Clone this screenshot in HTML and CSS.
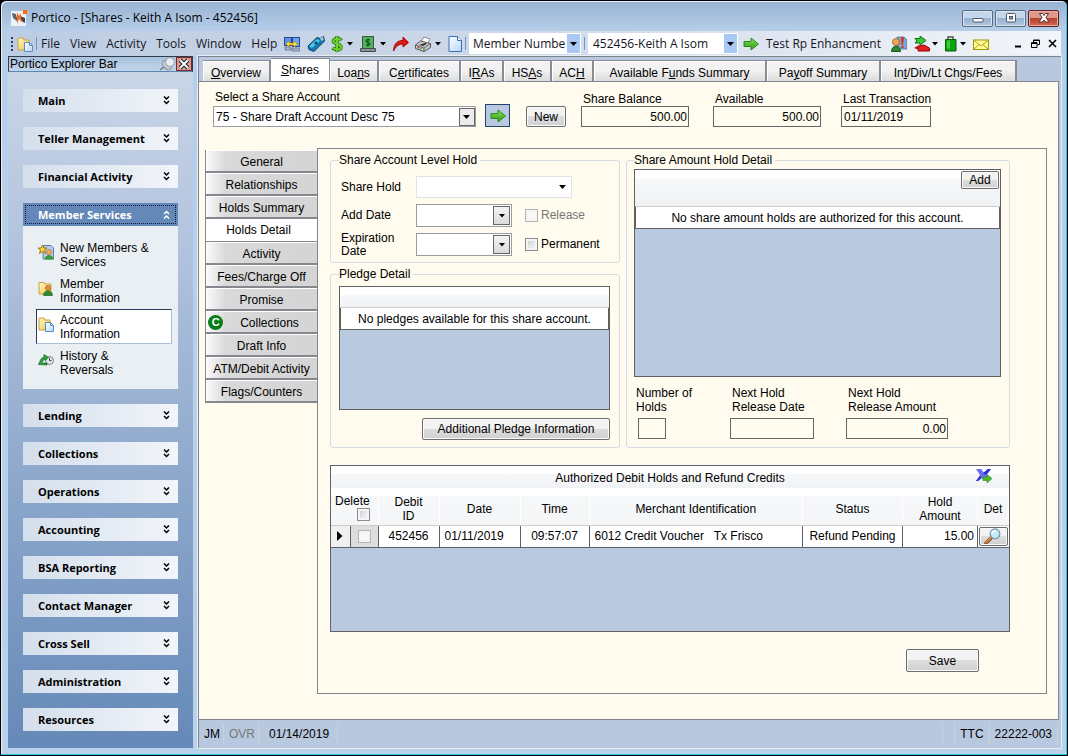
FILE: index.html
```html
<!DOCTYPE html>
<html lang="en">
<head>
<meta charset="utf-8">
<title>Portico - Shares</title>
<link rel="stylesheet" href="styles.css">
</head>
<body>
<svg class="defs" aria-hidden="true">
  <defs>
    <linearGradient id="greenG" x1="0" y1="0" x2="0" y2="1"><stop offset="0" stop-color="#8be060"/><stop offset="1" stop-color="#2a9a10"/></linearGradient>
    <linearGradient id="folderG" x1="0" y1="0" x2="1" y2="1"><stop offset="0" stop-color="#fff6c0"/><stop offset="1" stop-color="#ecc458"/></linearGradient>
    <linearGradient id="pageG" x1="0" y1="0" x2="1" y2="1"><stop offset="0" stop-color="#fff"/><stop offset="1" stop-color="#b4d8fa"/></linearGradient>
    <symbol id="folderpage" viewBox="0 0 16 16"><path d="M1 2h5l1 2h5v10H1z" fill="url(#folderG)" stroke="#c9a23c"/><path d="M7.500 6.500h5l3 3v6h-8z" fill="url(#pageG)" stroke="#5a8cc4"/><path d="M12.500 6.500v3h3" fill="none" stroke="#5a8cc4"/></symbol>
    <symbol id="chev" viewBox="0 0 7 9"><path d="M1 .5l2.500 2.500L6 .5M1 5l2.500 2.500L6 5" fill="none" stroke="currentColor" stroke-width="1.500"/></symbol>
    <symbol id="caret" viewBox="0 0 6 4"><path d="M0 0h6L3 3.500z"/></symbol>
    <symbol id="garrow" viewBox="0 0 16 14"><path d="M1 4.500h7V1l7.500 6L8 13V9.500H1z" fill="url(#greenG)" stroke="#2b8a1a"/></symbol>
  </defs>
</svg>
<div class="window">
  <header class="titlebar">
    <svg class="i16" viewBox="0 0 16 16"><rect y="1" width="15" height="15" fill="#eef1f5"/><path d="M1 3l4 1 2 8-5-4z" fill="#5a6470"/><path d="M9 6l5 2v5l-5-3z" fill="#3b4550"/><path d="M6 2l2 4 2-3v5l2 5-4-4-2 5z" fill="#f26a1b"/><rect x="12" width="4" height="4" fill="#ff6a10"/></svg>
    <h1>Portico - [Shares - Keith A Isom - 452456]</h1>
    <div class="winbtns">
      <button aria-label="Minimize"><svg viewBox="0 0 12 10" width="12" height="10"><rect x="1" y="5.500" width="10" height="3.500" rx="1" fill="#fff" stroke="#4a5666"/></svg></button>
      <button aria-label="Maximize"><svg viewBox="0 0 12 10" width="12" height="10"><rect x="1.500" y=".5" width="9" height="8.500" rx="1" fill="#fff" stroke="#4a5666"/><rect x="4.500" y="3.500" width="3" height="2.500" fill="#8da3bd" stroke="#4a5666"/></svg></button>
      <button class="close" aria-label="Close"><svg viewBox="0 0 12 10" width="12" height="10"><path d="M1.500.5h3L6 2.500 7.500.5h3L8 4.500l3 4.500H7.500L6 7 4.500 9H1l3-4.500z" fill="#fff" stroke="#5c3030"/></svg></button>
    </div>
  </header>

  <div class="toolbar">
    <span class="grip"></span>
    <svg class="i16"><use href="#folderpage"/></svg>
    <span class="sep"></span>
    <nav class="menu"><button>File</button><button>View</button><button>Activity</button><button>Tools</button><button>Window</button><button>Help</button></nav>
    <div class="tools">
      <svg class="i16" viewBox="0 0 16 16"><rect x=".5" y="1.500" width="7" height="8" fill="#5b94ea" stroke="#2b4790"/><rect x="8.500" y="1.500" width="7" height="9" fill="#66a4f4" stroke="#2b4790"/><path d="M1 11h6v3H1zM8 12h8v3H8z" fill="#a9b3c6" stroke="#5a6580" stroke-width=".7"/><path d="M2 8l3-3v2h5V5l3.500 3L10 11V9H5v2z" fill="#ffe23c" stroke="#a88400" stroke-width=".6"/></svg>
      <svg class="i18" viewBox="0 0 18 16"><path d="M1 10L10 1.500l3 1 3.500-2L17.500 5l-2 2-8.500 8.500-5-2z" fill="#1578ac" stroke="#0b4470"/><path d="M2 10l8-7 3 2-8 7z" fill="#4cc4e8"/><circle cx="9" cy="7" r="1.500" fill="#083c60"/><path d="M13 2l3-1 .5 3-2 1z" fill="#bcd"/></svg>
      <span class="drop"><svg class="i12" viewBox="0 0 12 16"><path d="M10.500 4.500C9 2.500 3 2 2.500 5S10 7.500 10 11s-6 3-8.500.8M6 0v16" fill="none" stroke="#2b7d10" stroke-width="3.600"/><path d="M10 4.500C9 2.500 3 2 2.500 5S10 7.500 10 11s-6 3-8 .8M6 .5v15" fill="none" stroke="#6fd030" stroke-width="2"/></svg><svg class="caret"><use href="#caret"/></svg></span>
      <span class="drop"><svg class="i16" viewBox="0 0 16 16"><rect x="2.500" y=".5" width="11" height="12" fill="#4db457" stroke="#40544a"/><path d="M10 4.200C9 3.200 6 3.200 6 5s4 1.200 4 3-3 1.700-4 .7M8 2.500v8" fill="none" stroke="#103a18"/><path d="M.5 12.500h15v3H.5z" fill="#8d9499" stroke="#454b50"/></svg><svg class="caret"><use href="#caret"/></svg></span>
      <svg class="i16" viewBox="0 0 16 16"><path d="M.5 15C1 8 4 4.500 10 4.500V1l5.500 5.500L10 11V8C6 8 3 10 .5 15z" fill="#e01818" stroke="#a00808"/></svg>
      <span class="drop"><svg class="i16" viewBox="0 0 16 16"><path d="M6 6l3-5 6 2-3 6z" fill="#fff" stroke="#777" stroke-width=".8"/><path d="M.5 9l5-4 10 2.500v4L9 15.500.5 12.500z" fill="#c9c9c9" stroke="#555"/><path d="M.5 9L9 12l6.500-4.500M9 12v3.500" fill="none" stroke="#666"/><path d="M4 9l6-2 2 1-4 2z" fill="#333"/><circle cx="3.500" cy="11.500" r=".9" fill="#d22"/><circle cx="6" cy="12.500" r=".8" fill="#2a2"/></svg><svg class="caret"><use href="#caret"/></svg></span>
      <svg class="i14" viewBox="0 0 14 16"><path d="M1 .5h8.500l4 4v11H1z" fill="url(#pageG)" stroke="#3c6cb4"/><path d="M9.500.5v4h4" fill="#fff" stroke="#3c6cb4"/></svg>
    </div>
    <span class="sep"></span>
    <select class="xp kind" aria-label="Search by"><option>Member Numbe</option></select>
    <span class="sep"></span>
    <select class="xp person" aria-label="Member"><option>452456-Keith A Isom</option></select>
    <button class="go"><svg width="16" height="14"><use href="#garrow"/></svg>Test Rp Enhancment</button>
    <div class="tools right">
      <svg class="i16" viewBox="0 0 16 16"><path d="M6 1h7l3 3v9H6z" fill="#7ba6d8" stroke="#3d6a9c" stroke-width=".7"/><path d="M10 1h3l-1 8h-1.500z" fill="#e03020"/><circle cx="11.500" cy="11" r="1.300" fill="#e03020"/><circle cx="5" cy="6" r="3.500" fill="#f0a850" stroke="#8a5418" stroke-width=".7"/><path d="M.5 15.500c0-7 9-7 9 0z" fill="#2f8a34" stroke="#1b5420"/></svg>
      <span class="drop"><svg class="i16" viewBox="0 0 16 16"><path d="M4 15l1-5 5-1 5.500 3v3z" fill="#e02020" stroke="#900"/><path d="M1 2.500h5V0l6 4.500L6 9V7H1l2-2z" fill="#38c838" stroke="#0a700a"/><path d="M0 12l5-3v5z" fill="#c01010"/></svg><svg class="caret"><use href="#caret"/></svg></span>
      <span class="drop"><svg class="i14" viewBox="0 0 14 16"><path d="M4 4V1h5v3" fill="none" stroke="#555" stroke-width="1.500"/><path d="M1.500 3.500h10.500v11.500H1.500z" fill="#0ca40c" stroke="#066006"/><path d="M3 4.500h3v8H3z" fill="#36cc36"/></svg><svg class="caret"><use href="#caret"/></svg></span>
      <svg class="i16" viewBox="0 0 16 16"><rect x=".5" y="4" width="15" height="9.500" fill="#fffa9a" stroke="#a09600"/><path d="M.5 4L8 10l7.500-6M.5 13.500L6 8.500M15.500 13.500L10 8.500" fill="none" stroke="#b0a400"/></svg>
    </div>
    <div class="mdi">
      <button aria-label="Minimize document"><svg viewBox="0 0 9 9" width="9" height="9"><path d="M1 7.500h6" stroke="#000" stroke-width="2"/></svg></button>
      <button aria-label="Restore document"><svg viewBox="0 0 9 9" width="9" height="9"><path d="M2.500 3V1h6v4.500H6.500M2.500 1.500h6" fill="none" stroke="#000"/><path d="M.5 3.500h5.500v5H.5zM.5 4.500H6" fill="none" stroke="#000"/></svg></button>
      <button aria-label="Close document"><svg viewBox="0 0 9 9" width="9" height="9"><path d="M1 1l7 7M8 1L1 8" stroke="#000" stroke-width="1.600"/></svg></button>
    </div>
  </div>

  <div class="body">
    <aside class="explorer">
      <div class="exphead"><h2>Portico Explorer Bar</h2>
        <svg width="17" height="14" viewBox="0 0 17 14"><path d="M1 13l5-4" stroke="#777" stroke-width="1.500"/><ellipse cx="8" cy="8" rx="5.500" ry="3.800" fill="#c4c8cf" stroke="#8a9099" transform="rotate(45 8 8)"/><circle cx="11" cy="5" r="4.300" fill="#eceef1" stroke="#9aa0a8"/></svg>
        <button aria-label="Close explorer bar"><svg viewBox="0 0 12 12" width="12" height="12"><path d="M2 2l8 8M10 2l-8 8" stroke="#222" stroke-width="4"/><path d="M2 2l8 8M10 2l-8 8" stroke="#fff" stroke-width="2"/></svg></button>
      </div>
      <nav class="groups">
        <button class="group">Main<svg class="chev"><use href="#chev"/></svg></button>
        <button class="group">Teller Management<svg class="chev"><use href="#chev"/></svg></button>
        <button class="group">Financial Activity<svg class="chev"><use href="#chev"/></svg></button>
        <div class="open">
          <button class="group active">Member Services<svg class="chev up"><use href="#chev"/></svg></button>
          <ul>
            <li><a href="#"><svg class="i16" viewBox="0 0 16 16"><path d="M5 1.500h8l2.500 2.500v11H5z" fill="#b9cbe8" stroke="#5c7cb0"/><circle cx="11" cy="8" r="2.500" fill="#f0b060" stroke="#9a6420" stroke-width=".6"/><path d="M6.500 15.500c0-6 9-6 9 0z" fill="#3c9c3c"/><path d="M4.500 1l1.300 3H9L6.500 6l1 3.500-3-2-3 2 1-3.500L0 4h3.200z" fill="#ffd832" stroke="#8c6400" stroke-width=".8"/></svg><span>New Members &amp; Services</span></a></li>
            <li><a href="#"><svg class="i16" viewBox="0 0 16 16"><path d="M1 2.500h5l1 1.500h6v10H1z" fill="url(#folderG)" stroke="#c9a23c"/><circle cx="10" cy="8" r="2.500" fill="#e8903c" stroke="#8a4c10" stroke-width=".6"/><path d="M5.500 15.500c0-6 9-6 9 0z" fill="#2c8c2c" stroke="#125412" stroke-width=".6"/></svg><span>Member Information</span></a></li>
            <li><a href="#" class="current"><svg class="i16"><use href="#folderpage"/></svg><span>Account Information</span></a></li>
            <li><a href="#"><svg class="i16" viewBox="0 0 16 16"><circle cx="11.500" cy="8.500" r="4" fill="#dfe5ea" stroke="#7b858e"/><path d="M11.500 6v2.500h2" fill="none" stroke="#444"/><path d="M.5 12.500L3 7l3-2.500V2.500L10.500 5.500 7 8.500V7L5 8.500 3.500 11H9v2z" fill="#2fa53b" stroke="#146a20" stroke-width=".7"/></svg><span>History &amp; Reversals</span></a></li>
          </ul>
        </div>
        <button class="group">Lending<svg class="chev"><use href="#chev"/></svg></button>
        <button class="group">Collections<svg class="chev"><use href="#chev"/></svg></button>
        <button class="group">Operations<svg class="chev"><use href="#chev"/></svg></button>
        <button class="group">Accounting<svg class="chev"><use href="#chev"/></svg></button>
        <button class="group">BSA Reporting<svg class="chev"><use href="#chev"/></svg></button>
        <button class="group">Contact Manager<svg class="chev"><use href="#chev"/></svg></button>
        <button class="group">Cross Sell<svg class="chev"><use href="#chev"/></svg></button>
        <button class="group">Administration<svg class="chev"><use href="#chev"/></svg></button>
        <button class="group">Resources<svg class="chev"><use href="#chev"/></svg></button>
      </nav>
    </aside>

    <main class="main">
      <nav class="tabs">
        <button><u>O</u>verview</button><button class="on"><u>S</u>hares</button><button>Loa<u>n</u>s</button><button>C<u>e</u>rtificates</button><button>I<u>R</u>As</button><button>HS<u>A</u>s</button><button>AC<u>H</u></button><button>Available F<u>u</u>nds Summary</button><button>Pa<u>y</u>off Summary</button><button>In<u>t</u>/Div/Lt Chgs/Fees</button>
      </nav>
      <section class="page">
        <div class="account">
          <div class="pick"><label for="acct">Select a Share Account</label>
            <select id="acct" class="boxed"><option>75 - Share Draft Account Desc 75</option></select></div>
          <button class="goacct" aria-label="Go to account"><svg width="16" height="14"><use href="#garrow"/></svg></button>
          <button class="btn new">New</button>
          <div class="fact"><label for="bal">Share Balance</label><input id="bal" class="ro num" value="500.00" readonly></div>
          <div class="fact"><label for="avl">Available</label><input id="avl" class="ro num" value="500.00" readonly></div>
          <div class="fact last"><label for="lst">Last Transaction</label><input id="lst" class="ro" value="01/11/2019" readonly></div>
        </div>

        <div class="detail">
          <nav class="sidetabs">
            <button>General</button><button>Relationships</button><button>Holds Summary</button><button class="on">Holds Detail</button><button>Activity</button><button>Fees/Charge Off</button><button>Promise</button><button class="flag"><span class="dot">C</span>Collections</button><button>Draft Info</button><button>ATM/Debit Activity</button><button>Flags/Counters</button>
          </nav>
          <div class="panel">
            <div class="cols">
              <div class="left">
                <fieldset class="hold"><legend>Share Account Level Hold</legend>
                  <div class="form">
                    <label for="sh">Share Hold</label><select id="sh" class="flat"><option></option></select>
                    <label for="ad">Add Date</label><span class="date"><input id="ad"><button aria-label="Pick add date"><svg class="caret"><use href="#caret"/></svg></button></span>
                    <label class="check off"><input type="checkbox" disabled>Release</label>
                    <label for="ed">Expiration Date</label><span class="date"><input id="ed"><button aria-label="Pick expiration date"><svg class="caret"><use href="#caret"/></svg></button></span>
                    <label class="check"><input type="checkbox">Permanent</label>
                  </div>
                </fieldset>
                <fieldset class="pledge"><legend>Pledge Detail</legend>
                  <div class="grid"><div class="ghead"></div><div class="grow">No pledges available for this share account.</div></div>
                  <button class="btn addl">Additional Pledge Information</button>
                </fieldset>
              </div>
              <fieldset class="amount"><legend>Share Amount Hold Detail</legend>
                <div class="grid"><div class="ghead tall"><button class="btn add">Add</button></div><div class="grow">No share amount holds are authorized for this account.</div></div>
                <div class="sums">
                  <div class="count"><label for="nh">Number of Holds</label><input id="nh" class="ro" readonly></div>
                  <div><label for="nd">Next Hold Release Date</label><input id="nd" class="ro" readonly></div>
                  <div><label for="na">Next Hold Release Amount</label><input id="na" class="ro num" value="0.00" readonly></div>
                </div>
              </fieldset>
            </div>

            <div class="grid debits">
              <div class="caption"><span>Authorized Debit Holds and Refund Credits</span><button aria-label="Export to Excel"><svg class="i18" viewBox="0 0 18 16"><path d="M1 1h5l3 4 4-4h3l-4.500 6L14 11H9L7 9l-4 4H1l4-6z" fill="#6a6cf4"/><path d="M8 5l5-4h3l-5 6zM1 13l4-5 2 2-4 3z" fill="#2c30d8"/><path d="M7 9h5V6.500l5 4-5 4.500v-2.500H8z" fill="#4fb832" stroke="#2d8818" stroke-width=".6"/></svg></button></div>
              <table>
                <colgroup><col class="c0"><col class="c1"><col class="c2"><col class="c3"><col class="c4"><col><col class="c6"><col class="c7"><col class="c8"></colgroup>
                <thead><tr><th colspan="2" class="del"><label>Delete<input type="checkbox"></label></th><th>Debit<br>ID</th><th>Date</th><th>Time</th><th>Merchant Identification</th><th>Status</th><th>Hold<br>Amount</th><th>Det</th></tr></thead>
                <tbody><tr><td class="sel"><svg width="6" height="10" viewBox="0 0 6 10"><path d="M0 0l5.500 5L0 10z"/></svg></td><td class="chk"><input type="checkbox" disabled aria-label="Delete 452456"></td><td>452456</td><td class="l">01/11/2019</td><td>09:57:07</td><td class="l">6012 Credit Voucher &nbsp; Tx Frisco</td><td>Refund Pending</td><td class="r">15.00</td><td class="det"><button class="btn" aria-label="Details"><svg class="i18" viewBox="0 0 18 16"><path d="M2 15l5-5" stroke="#6b4a2c" stroke-width="3.400" stroke-linecap="round"/><path d="M2 14.500l5-5" stroke="#e08a34" stroke-width="1.800" stroke-linecap="round"/><circle cx="11" cy="5.800" r="4.800" fill="#c4ecfc" stroke="#7c9cb4" stroke-width="1.300"/><path d="M8 5c.5-2 2-2.500 4-2.200" fill="none" stroke="#fff" stroke-width="1.500"/></svg></button></td></tr></tbody>
              </table>
            </div>
            <button class="btn save">Save</button>
          </div>
        </div>
      </section>
      <footer class="status"><span>JM</span><span class="dim">OVR</span><span class="day">01/14/2019</span><span class="fill"></span><span class="gap"></span><span>TTC</span><span>22222-003</span></footer>
    </main>
  </div>
</div>
</body>
</html>
```
FILE: styles.css
```css
* { box-sizing: border-box; }
body { margin: 0; font: 12px/14px "Liberation Sans", Arial, sans-serif; color: #000; background: #000; }
button, input, select { font: inherit; color: inherit; }
button { padding: 0; border: 0; background: none; text-align: center; }
h1, h2 { margin: 0; font-weight: normal; }
.defs { position: absolute; width: 0; height: 0; }
.i12 { width: 12px; height: 16px; }
.i14 { width: 14px; height: 16px; }
.i16 { width: 16px; height: 16px; }
.i18 { width: 18px; height: 16px; }
svg { flex: none; display: block; }
.caret { width: 6px; height: 4px; }

.window { display: flex; flex-direction: column; min-height: 100vh; border: 1px solid #000; border-radius: 6px 6px 0 0; padding: 0 6px 7px 7px; background: linear-gradient(#98b3d3, #b6cee9 30px, #b9d1ea); box-shadow: inset -1px -1px 0 #2cc8e4, inset 1px 1px 0 #e6f1fb; }

.titlebar { display: flex; align-items: center; height: 30px; padding: 4px 2px 0 3px; gap: 4px; font: 12px/16px "Open Sans", sans-serif; }
.titlebar h1 { flex: 1; font-size: 12px; line-height: 16px; }
.winbtns { display: flex; gap: 2px; }
.winbtns button { display: flex; align-items: center; justify-content: center; width: 31px; height: 17px; border: 1px solid #5a6c84; border-radius: 2px; background: linear-gradient(#c4d6ea 50%, #97b1d0 50%, #b0c8e2); box-shadow: inset 0 0 0 1px #d6e4f2; }
.winbtns .close { border-color: #5c2020; background: linear-gradient(#dd9a8c 45%, #b8402c 50%, #cf6a50); box-shadow: inset 0 0 0 1px #e8b0a4; }

.toolbar { display: flex; align-items: center; height: 25px; padding: 0 4px 0 3px; background: linear-gradient(90deg, #bccce2, #cfd9e9 50%, #f2f5fa); font: 12px/16px "Open Sans", sans-serif; color: #15151f; }
.grip { width: 2px; height: 14px; margin-right: 4px; background: repeating-linear-gradient(#27406f 0 2px, transparent 2px 4px); }
.sep { width: 1px; height: 13px; margin: 0 3px; background: #7095cc; }
.menu { display: flex; gap: 10px; flex: 0 0 244px; padding-left: 1px; }
.tools { display: flex; align-items: center; flex: 1 1 178px; max-width: 178px; justify-content: space-between; }
.drop { display: flex; align-items: center; gap: 4px; }
.xp { appearance: none; height: 21px; border: 0; padding: 0 14px 0 4px; color: #15151f; background: url("data:image/svg+xml,%3Csvg xmlns='http://www.w3.org/2000/svg' width='13' height='19'%3E%3Crect width='13' height='19' fill='%23a9c9f4'/%3E%3Cpath d='M3 8h7L6.500 12z'/%3E%3C/svg%3E") right 1px center no-repeat #fff; }
.kind { width: 112px; }
.person { width: 150px; padding-left: 5px; }
.go { display: flex; align-items: center; gap: 7px; margin-left: 5px; white-space: nowrap; }
.tools.right { margin-left: 10px; max-width: 98px; flex-basis: 98px; }
.tools.right .drop { gap: 2px; }
.mdi { display: flex; flex: 1; justify-content: flex-end; gap: 8px; }

.body { display: flex; flex: 1; }
.explorer { flex: 0 0 185px; background: linear-gradient(#cbd7e7, #b4c5df 25%, #6589b8); }
.exphead { display: flex; align-items: center; height: 16px; border: 1px solid #333c4c; border-bottom-color: #5c85b8; background: linear-gradient(#a8c2e0, #c3d4e8); }
.exphead h2 { flex: 1; padding-left: 1px; font-size: 12px; line-height: 14px; }
.exphead button { width: 16px; height: 14px; display: grid; place-items: center; border: 1px solid #7a2a26; background: #d89a96; }
.groups { display: flex; flex-direction: column; gap: 15px; padding: 17px 15px 16px 15px; }
.group { display: flex; align-items: center; justify-content: space-between; width: 100%; height: 23px; padding: 0 8px 0 15px; font: bold 11px/16px "Open Sans", sans-serif; background: linear-gradient(90deg, #d4dfec, #f2f5fa); }
.chev { width: 7px; height: 9px; }
.up { transform: rotate(180deg); }
.active { color: #fff; background: #6488b8; border: 1px solid #6488b8; outline: 1px dotted #0b1a38; outline-offset: -3px; padding: 0 7px 0 14px; }
.open { background: #e9eff3; }
.open ul { list-style: none; margin: 0; padding: 11px 6px 9px 13px; display: grid; gap: 1px; }
.open a { display: flex; gap: 6px; align-items: center; height: 35px; padding: 0 20px 0 1px; border: 1px solid transparent; color: #000; text-decoration: none; }
.open a svg { align-self: flex-start; margin-top: 6px; }
.open a.current { background: #fff; border-color: #26385c #aebfd8 #aebfd8 #26385c; }
.open span { max-width: 100px; }

.main { flex: 1; display: flex; flex-direction: column; margin-left: 5px; border: 1px solid #7d838c; border-width: 1px 0 0 1px; background: #b8c8df; box-shadow: 0 0 0 1px #e8eef4; min-width: 0; }
.tabs { display: grid; grid-template-columns: 68px 59px 49px 82px 43px 48px 42px 173px 114px 136px; align-items: end; padding: 0 0 0 4px; height: 24px; }
.tabs button { height: 21px; padding-top: 4px; border: 1px solid #888c96; border-width: 1px 2px 0 0; background: linear-gradient(#f2f2f2 45%, #dcdcdc); box-shadow: inset 1px 1px 0 #fff; white-space: nowrap; }
.tabs .on { height: 23px; padding: 0 0 1px; background: #fff; border-right-width: 1px; }
.page { flex: 1; margin: 0 2px 0 0; border: 1px solid #80858f; border-left: 0; background: #fffbee; padding: 7px 11px 24px 6px; }
.account { display: flex; align-items: flex-end; padding-left: 8px; height: 38px; }
.account label { display: block; }
.pick label { padding: 0 0 2px 2px; }
.boxed, .flat { appearance: none; display: block; border: 1px solid #9a9ca0; background-color: #fff; }
.boxed { width: 263px; height: 21px; padding: 0 20px 0 2px; background-image: url("data:image/svg+xml,%3Csvg xmlns='http://www.w3.org/2000/svg' width='16' height='18'%3E%3Crect x='.5' y='.5' width='15' height='17' fill='%23ececec' stroke='%23666'/%3E%3Cpath d='M4 7h7L7.500 11z'/%3E%3C/svg%3E"); background-repeat: no-repeat; background-position: right center; }
.goacct { width: 25px; height: 23px; margin-left: 9px; display: grid; place-items: center; border: 1px solid #26426e; background: #b8c9e0; }
.btn { border: 1px solid #6c6c6c; border-radius: 2px; background: linear-gradient(#f2f2f2 50%, #dddddd 50%, #cfcfcf); box-shadow: inset 0 0 0 1px #fafafa; }
.new { width: 40px; height: 21px; margin: 0 15px 0 16px; padding-top: 1px; }
.fact { width: 132px; }
.fact label { padding: 0 0 0 2px; }
.ro { display: block; width: 108px; height: 21px; border: 1px solid #666; background: transparent; padding: 0 2px; }
.fact.last { margin-left: -4px; }
.last .ro { width: 90px; }
.num { text-align: right; padding-right: 1px; }

.detail { display: flex; padding-top: 21px; }
.sidetabs { flex: 0 0 112px; padding-top: 2px; display: flex; flex-direction: column; }
.sidetabs button { height: 23px; padding: 2px 0 0; border: 1px solid #85888f; border-width: 0 0 2px 1px; background: linear-gradient(90deg, #fafafa, #d9d9d9 18%, #d4d4d4); box-shadow: inset 1px 1px 0 #fff; white-space: nowrap; }
.sidetabs .on { background: #fff; border-bottom-width: 1px; padding: 0 6px 0 0; }
.flag { display: flex; align-items: center; justify-content: center; gap: 17px; }
.sidetabs .flag { padding-right: 16px; }
.dot { width: 15px; height: 15px; border-radius: 50%; background: #087c14; color: #fff; font-size: 11px; font-weight: bold; }
.panel { flex: 1; border: 1px solid #80858f; padding: 5px 36px 21px 12px; min-width: 0; }
.cols { display: grid; grid-template-columns: 290fr 384fr; gap: 6px; }
.left { display: flex; flex-direction: column; gap: 5px; }
fieldset { min-width: 0; margin: 0; padding: 0 9px 7px 8px; border: 1px solid #d5dce6; border-radius: 3px; }
legend { padding: 0 3px 0 0; line-height: 13px; }
.hold { padding-bottom: 6px; }
.form { display: grid; grid-template-columns: 75px 109px 1fr; grid-template-rows: 22px 23px 23px; row-gap: 6px; align-items: center; padding: 9px 0 0 2px; line-height: 13px; }
.flat { grid-column: 2 / 4; width: 156px; height: 22px; border-color: #dfe2e8; background-image: url("data:image/svg+xml,%3Csvg xmlns='http://www.w3.org/2000/svg' width='16' height='16'%3E%3Cpath d='M4 6h7L7.500 10z'/%3E%3C/svg%3E"); background-repeat: no-repeat; background-position: right center; }
.date { display: flex; width: 96px; height: 23px; border: 1px solid #9a9ca0; padding: 1px; background: #fff; }
.date input { flex: 1; min-width: 0; border: 0; padding: 0 2px; }
.date button { width: 17px; display: grid; place-items: center; border: 1px solid #666; background: linear-gradient(#f4f4f4, #dadada); }
.check { display: flex; align-items: center; gap: 3px; }
.off { color: #777; }
input[type=checkbox] { appearance: none; margin: 0; width: 13px; height: 13px; border: 1px solid #8a8c90; background: linear-gradient(135deg, #c4c9d0, #fff); box-shadow: inset 0 0 0 2px #f4f4f4; }
input[type=checkbox]:disabled { border-color: #b4b4b4; background: #f8f8f8; }

.grid { border: 1px solid #5e6064; background: #b8c9e0; }
.ghead { height: 21px; background: linear-gradient(#fff 8px, #f7f8fa 8px, #f0f1f3); border-bottom: 1px solid #ccc; }
.tall { height: 37px; display: flex; justify-content: flex-end; }
.grow { height: 22px; padding-top: 4px; border: 1px solid #5e6064; border-top: 0; background: #fff; text-align: center; white-space: nowrap; }
.pledge .grid { height: 124px; margin-top: 5px; }
.addl { display: block; width: 188px; height: 22px; margin: 8px 0 0 auto; }
.add { width: 38px; height: 18px; margin: 1px; }
.amount { padding: 0 8px 0 7px; }
.amount .grid { height: 208px; margin-top: 2px; }
.sums { display: flex; padding: 9px 0 0 2px; }
.sums label { display: block; max-width: 98px; min-height: 28px; margin-bottom: 4px; padding-left: 2px; }
.sums > div { flex: 0 0 116px; }
.sums .count { flex-basis: 94px; }
.sums .count label { max-width: 64px; padding-left: 0; }
.sums #nh { width: 28px; margin-left: 2px; }
.sums #nd { width: 84px; }
.sums #na { width: 102px; }

.debits { margin-top: 17px; height: 167px; }
.caption { display: grid; grid-template-columns: 1fr auto; align-items: center; height: 22px; padding: 2px 16px 0 34px; text-align: center; background: linear-gradient(#fff 8px, #f7f8fa 8px, #f0f2f4); }
.caption button { margin-bottom: 4px; }
table { width: 100%; table-layout: fixed; border-collapse: collapse; }
.c0 { width: 19px; } .c1 { width: 28px; } .c2 { width: 61px; } .c3 { width: 81px; } .c4 { width: 69px; } .c6 { width: 100px; } .c7 { width: 75px; } .c8 { width: 31px; }
th { height: 37px; padding: 5px 0 0; font-weight: normal; background: linear-gradient(#fff 8px, #f7f8fa 8px, #f4f5f7); border-bottom: 1px solid #ccc; border-right: 1px solid #fff; }
th.del { padding: 3px 0 0; }
.del label { display: block; line-height: 13px; text-align: left; padding-left: 4px; }
.del input { display: block; margin-left: 22px; }
td { height: 22px; padding: 0; text-align: center; background: #fff; border-right: 1px solid #5e6064; border-bottom: 1px solid #5e6064; white-space: nowrap; }
td:last-child { border-right: 0; }
.l { text-align: left; padding-left: 5px; }
.r { text-align: right; padding-right: 3px; }
.sel, .chk { background: #f0f0f0; }
.chk { background: #ddd; }
.sel svg, .chk input { margin: 0 auto; display: block; }
.det .btn { display: grid; place-items: center; width: 29px; height: 19px; margin: auto; }
.save { display: block; width: 73px; height: 23px; margin: 17px 31px 0 auto; }

.status { display: flex; height: 28px; align-items: center; padding: 1px 3px 0 1px; background: #b8c8df; }
.status span { height: 21px; line-height: 21px; padding: 0 5px; border-right: 1px solid #cdd2da; }
.status span:first-child { padding-left: 4px; padding-right: 3px; }
.status .dim { color: #777; padding-right: 3px; }
.status .day { padding: 0 8px 0 10px; }
.status .fill { flex: 1; }
.status .gap { width: 12px; }
```
